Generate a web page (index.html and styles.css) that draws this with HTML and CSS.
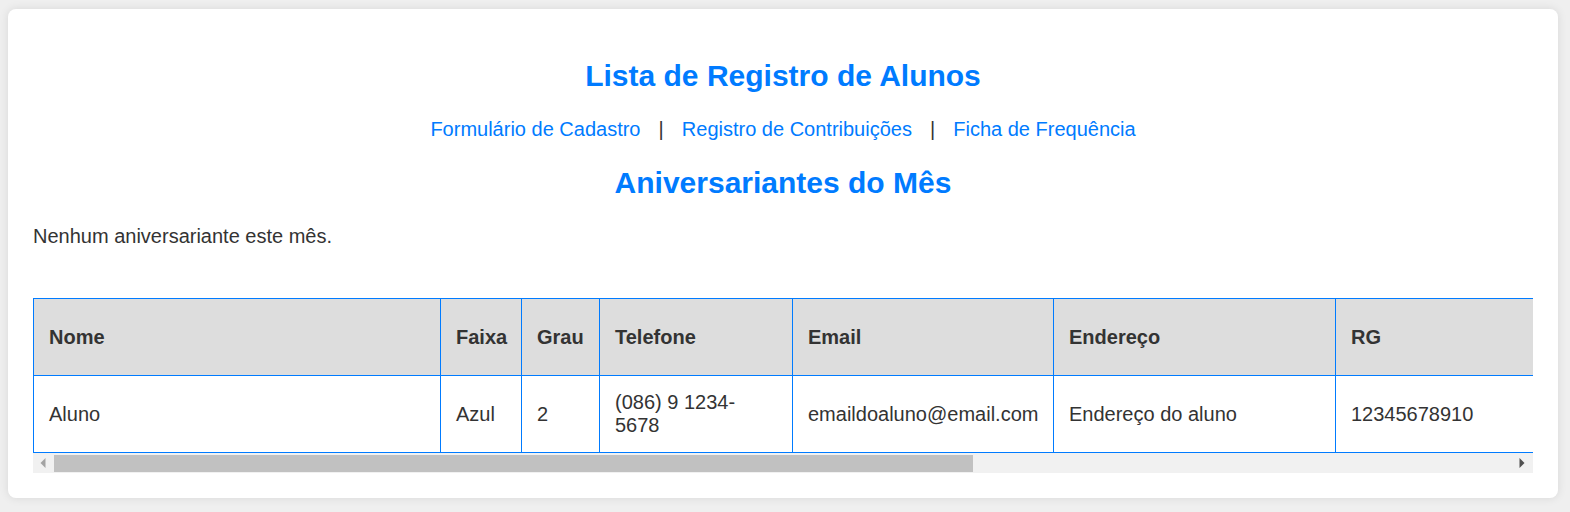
FILE: index.html
```html
<!DOCTYPE html>
<html lang="pt-BR">
<head>
<meta charset="utf-8">
<title>Lista de Registro de Alunos</title>
<link rel="stylesheet" href="styles.css">
</head>
<body>
<div class="card">
  <h2 class="title">Lista de Registro de Alunos</h2>
  <nav class="nav">
    <a href="#">Formulário de Cadastro</a> <span class="sep">|</span> <a href="#">Registro de Contribuições</a> <span class="sep">|</span> <a href="#">Ficha de Frequência</a>
  </nav>
  <h2 class="title">Aniversariantes do Mês</h2>
  <p class="empty">Nenhum aniversariante este mês.</p>
  <div class="table-wrap">
    <table class="students">
      <colgroup>
        <col class="c-nome"><col class="c-faixa"><col class="c-grau"><col class="c-tel"><col class="c-email"><col class="c-end"><col class="c-rg">
      </colgroup>
      <thead>
        <tr>
          <th>Nome</th><th>Faixa</th><th>Grau</th><th>Telefone</th><th>Email</th><th>Endereço</th><th>RG</th>
        </tr>
      </thead>
      <tbody>
        <tr>
          <td>Aluno</td><td>Azul</td><td>2</td><td>(086) 9 1234-5678</td><td>emaildoaluno@email.com</td><td>Endereço do aluno</td><td>12345678910</td>
        </tr>
      </tbody>
    </table>
  </div>
  <div class="hscroll" aria-hidden="true">
    <span class="arrow">
      <svg width="21" height="20" viewBox="0 0 21 20"><polygon points="12.5,5 12.5,15 7.5,10" fill="#a3a3a3"/></svg>
    </span>
    <div class="track"><div class="thumb"></div></div>
    <span class="arrow">
      <svg width="21" height="20" viewBox="0 0 21 20"><polygon points="7.5,5 7.5,15 12.5,10" fill="#505050"/></svg>
    </span>
  </div>
</div>
</body>
</html>
```

FILE: styles.css
```css
html, body {
  margin: 0;
  background: #efefef;
}
body {
  padding: 9px 12px 14px 8px;
  font-family: "Liberation Sans", Arial, sans-serif;
  font-size: 20px;
  color: #333;
}
.card {
  background: #fff;
  border-radius: 8px;
  box-shadow: 0 0 10px rgba(0, 0, 0, 0.1);
  padding: 25px 25px 25px;
}
.title {
  margin: 25px 0;
  font-size: 30px;
  font-weight: bold;
  color: #007bff;
  text-align: center;
  line-height: 34px;
}
.nav {
  text-align: center;
  line-height: 23px;
  margin: 0;
}
.nav a {
  color: #007bff;
  text-decoration: none;
}
.sep {
  color: #333;
  margin: 0 12.5px;
}
.empty {
  margin: 0 0 50px;
  line-height: 23px;
}
.table-wrap {
  overflow: hidden;
}
.students {
  border-collapse: collapse;
  table-layout: fixed;
  width: 2380px;
}
.students th,
.students td {
  border: 1px solid #007bff;
  padding: 15px;
  text-align: left;
  vertical-align: middle;
  line-height: 23px;
  font-size: 20px;
}
.students th {
  background: #ddd;
  font-weight: bold;
  height: 46px;
}
.students td {
  height: 46px;
}
.c-nome { width: 407px; }
.c-faixa { width: 81px; }
.c-grau { width: 78px; }
.c-tel { width: 193px; }
.c-email { width: 261px; }
.c-end { width: 282px; }
.c-rg { width: 1078px; }
.hscroll {
  display: flex;
  height: 20px;
  background: #f1f1f1;
}
.arrow {
  display: flex;
  align-items: center;
  width: 21px;
  flex: 0 0 21px;
}
.arrow svg {
  display: block;
}
.track {
  flex: 1;
  padding: 2px 0 1px;
}
.thumb {
  width: 63%;
  height: 100%;
  background: #c1c1c1;
}
```
